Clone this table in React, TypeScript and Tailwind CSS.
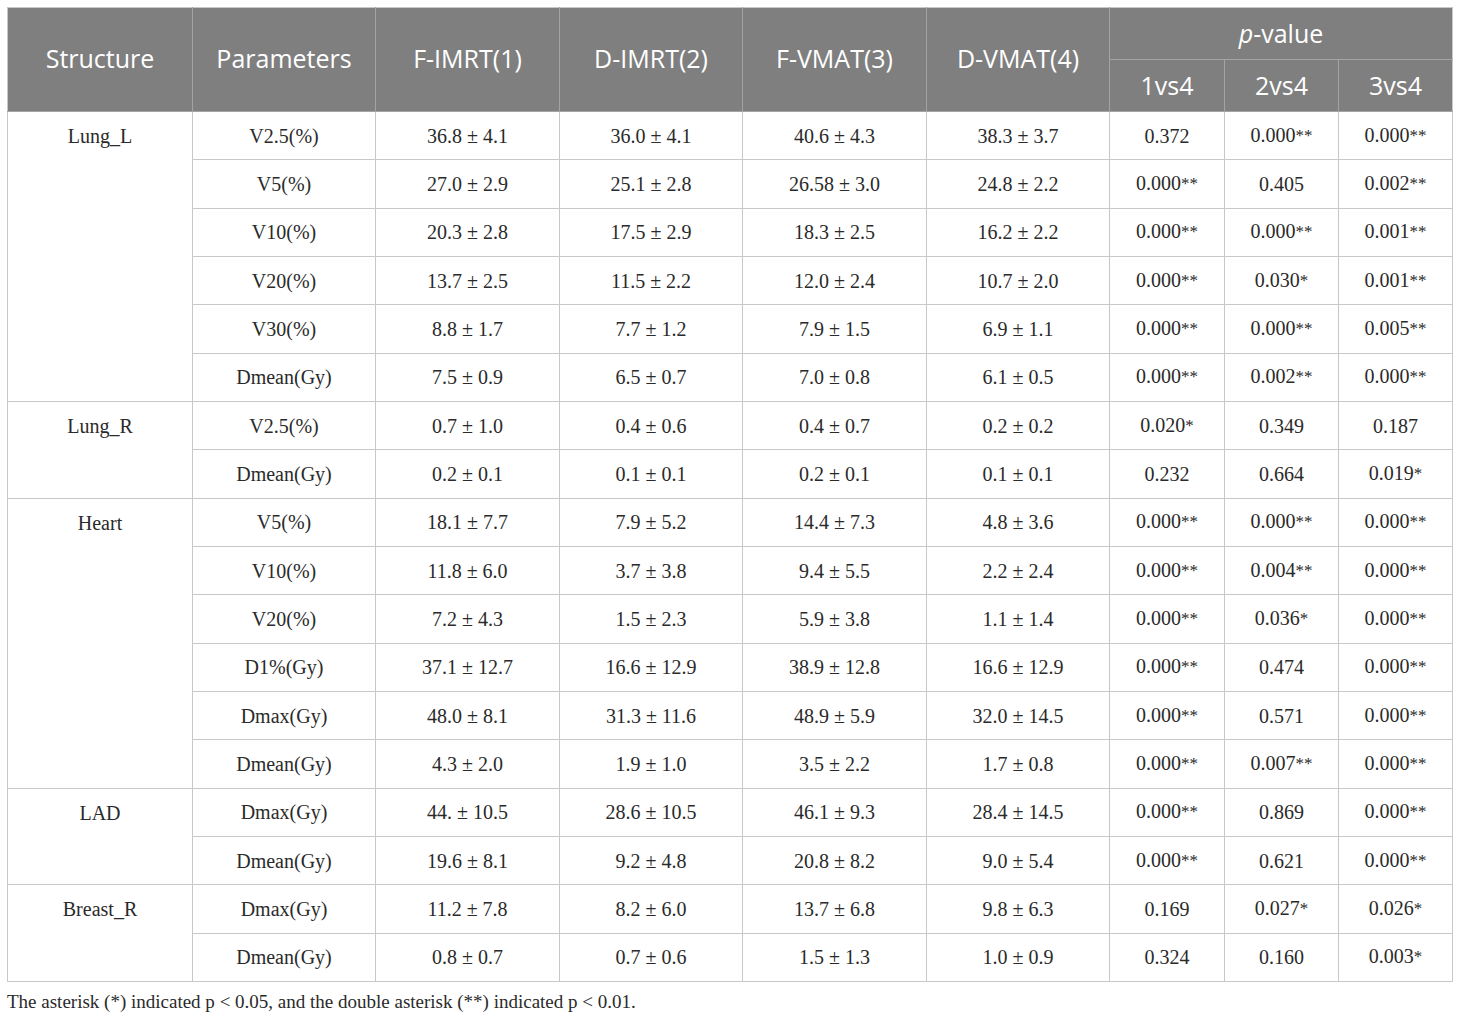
const rows: { structure?: string; span?: number; param: string; vals: string[]; p: string[] }[] = [
  { structure: 'Lung_L', span: 6, param: 'V2.5(%)', vals: ['36.8 ± 4.1', '36.0 ± 4.1', '40.6 ± 4.3', '38.3 ± 3.7'], p: ['0.372', '0.000**', '0.000**'] },
  { param: 'V5(%)', vals: ['27.0 ± 2.9', '25.1 ± 2.8', '26.58 ± 3.0', '24.8 ± 2.2'], p: ['0.000**', '0.405', '0.002**'] },
  { param: 'V10(%)', vals: ['20.3 ± 2.8', '17.5 ± 2.9', '18.3 ± 2.5', '16.2 ± 2.2'], p: ['0.000**', '0.000**', '0.001**'] },
  { param: 'V20(%)', vals: ['13.7 ± 2.5', '11.5 ± 2.2', '12.0 ± 2.4', '10.7 ± 2.0'], p: ['0.000**', '0.030*', '0.001**'] },
  { param: 'V30(%)', vals: ['8.8 ± 1.7', '7.7 ± 1.2', '7.9 ± 1.5', '6.9 ± 1.1'], p: ['0.000**', '0.000**', '0.005**'] },
  { param: 'Dmean(Gy)', vals: ['7.5 ± 0.9', '6.5 ± 0.7', '7.0 ± 0.8', '6.1 ± 0.5'], p: ['0.000**', '0.002**', '0.000**'] },
  { structure: 'Lung_R', span: 2, param: 'V2.5(%)', vals: ['0.7 ± 1.0', '0.4 ± 0.6', '0.4 ± 0.7', '0.2 ± 0.2'], p: ['0.020*', '0.349', '0.187'] },
  { param: 'Dmean(Gy)', vals: ['0.2 ± 0.1', '0.1 ± 0.1', '0.2 ± 0.1', '0.1 ± 0.1'], p: ['0.232', '0.664', '0.019*'] },
  { structure: 'Heart', span: 6, param: 'V5(%)', vals: ['18.1 ± 7.7', '7.9 ± 5.2', '14.4 ± 7.3', '4.8 ± 3.6'], p: ['0.000**', '0.000**', '0.000**'] },
  { param: 'V10(%)', vals: ['11.8 ± 6.0', '3.7 ± 3.8', '9.4 ± 5.5', '2.2 ± 2.4'], p: ['0.000**', '0.004**', '0.000**'] },
  { param: 'V20(%)', vals: ['7.2 ± 4.3', '1.5 ± 2.3', '5.9 ± 3.8', '1.1 ± 1.4'], p: ['0.000**', '0.036*', '0.000**'] },
  { param: 'D1%(Gy)', vals: ['37.1 ± 12.7', '16.6 ± 12.9', '38.9 ± 12.8', '16.6 ± 12.9'], p: ['0.000**', '0.474', '0.000**'] },
  { param: 'Dmax(Gy)', vals: ['48.0 ± 8.1', '31.3 ± 11.6', '48.9 ± 5.9', '32.0 ± 14.5'], p: ['0.000**', '0.571', '0.000**'] },
  { param: 'Dmean(Gy)', vals: ['4.3 ± 2.0', '1.9 ± 1.0', '3.5 ± 2.2', '1.7 ± 0.8'], p: ['0.000**', '0.007**', '0.000**'] },
  { structure: 'LAD', span: 2, param: 'Dmax(Gy)', vals: ['44. ± 10.5', '28.6 ± 10.5', '46.1 ± 9.3', '28.4 ± 14.5'], p: ['0.000**', '0.869', '0.000**'] },
  { param: 'Dmean(Gy)', vals: ['19.6 ± 8.1', '9.2 ± 4.8', '20.8 ± 8.2', '9.0 ± 5.4'], p: ['0.000**', '0.621', '0.000**'] },
  { structure: 'Breast_R', span: 2, param: 'Dmax(Gy)', vals: ['11.2 ± 7.8', '8.2 ± 6.0', '13.7 ± 6.8', '9.8 ± 6.3'], p: ['0.169', '0.027*', '0.026*'] },
  { param: 'Dmean(Gy)', vals: ['0.8 ± 0.7', '0.7 ± 0.6', '1.5 ± 1.3', '1.0 ± 0.9'], p: ['0.324', '0.160', '0.003*'] },
];

// p-values: the asterisks are set a little smaller and raised, as in the source table
function PVal({ v }: { v: string }) {
  const num = v.replace(/\*/g, '');
  const stars = v.slice(num.length);
  return (
    <>
      {num}
      {stars && <span className="relative -top-[1px] text-[17px]">{stars}</span>}
    </>
  );
}

const td = 'border border-[#c8c8c8] h-[48.33px] p-0 text-center align-middle';
const th = 'border border-[#a3a3a3] font-normal text-center align-middle p-0';

export default function App() {
  return (
    <div className="w-[1460px] h-[1018px] bg-white pt-[7px] pl-[7px] font-['Liberation_Serif',serif] text-[20px] leading-[24px] text-[#2a2a2a]">
      <table className="table-fixed border-collapse w-[1445px]">
        <colgroup>
          <col className="w-[185px]" />
          <col className="w-[183px]" />
          <col className="w-[184px]" />
          <col className="w-[183px]" />
          <col className="w-[184px]" />
          <col className="w-[183px]" />
          <col className="w-[115px]" />
          <col className="w-[114px]" />
          <col className="w-[114px]" />
        </colgroup>
        <thead className="bg-[#7f7f7f] text-white font-['Open_Sans',sans-serif] text-[25px] leading-[28px]">
          <tr className="h-[52px]">
            <th rowSpan={2} className={th + ' border-l-[#c8c8c8] border-t-[#c8c8c8] pb-[3px]'}>Structure</th>
            <th rowSpan={2} className={th + ' border-t-[#c8c8c8] pb-[3px]'}>Parameters</th>
            <th rowSpan={2} className={th + ' border-t-[#c8c8c8] pb-[3px]'}>F-IMRT(1)</th>
            <th rowSpan={2} className={th + ' border-t-[#c8c8c8] pb-[3px]'}>D-IMRT(2)</th>
            <th rowSpan={2} className={th + ' border-t-[#c8c8c8] pb-[3px]'}>F-VMAT(3)</th>
            <th rowSpan={2} className={th + ' border-t-[#c8c8c8] pb-[3px]'}>D-VMAT(4)</th>
            <th colSpan={3} className={th + ' border-r-[#c8c8c8] border-t-[#c8c8c8] pb-[2px]'}>
              <span className="italic">p</span>-value
            </th>
          </tr>
          <tr className="h-[52px]">
            <th className={th + ' pb-[2px]'}>1vs4</th>
            <th className={th + ' pb-[2px]'}>2vs4</th>
            <th className={th + ' border-r-[#c8c8c8] pb-[2px]'}>3vs4</th>
          </tr>
        </thead>
        <tbody>
          {rows.map((r, i) => (
            <tr key={i}>
              {r.structure && (
                <td rowSpan={r.span} className="border border-[#c8c8c8] p-0 text-center align-top pt-[12px]">
                  {r.structure}
                </td>
              )}
              <td className={td}>{r.param}</td>
              {r.vals.map((v, j) => (
                <td key={j} className={td}>{v}</td>
              ))}
              {r.p.map((v, j) => (
                <td key={j} className={td}>
                  <PVal v={v} />
                </td>
              ))}
            </tr>
          ))}
        </tbody>
      </table>
      <p className="mt-[8px] text-[19px] leading-[24px] text-[#2a2a2a]">
        The asterisk (*) indicated p {'<'} 0.05, and the double asterisk (**) indicated p {'<'} 0.01.
      </p>
    </div>
  );
}
